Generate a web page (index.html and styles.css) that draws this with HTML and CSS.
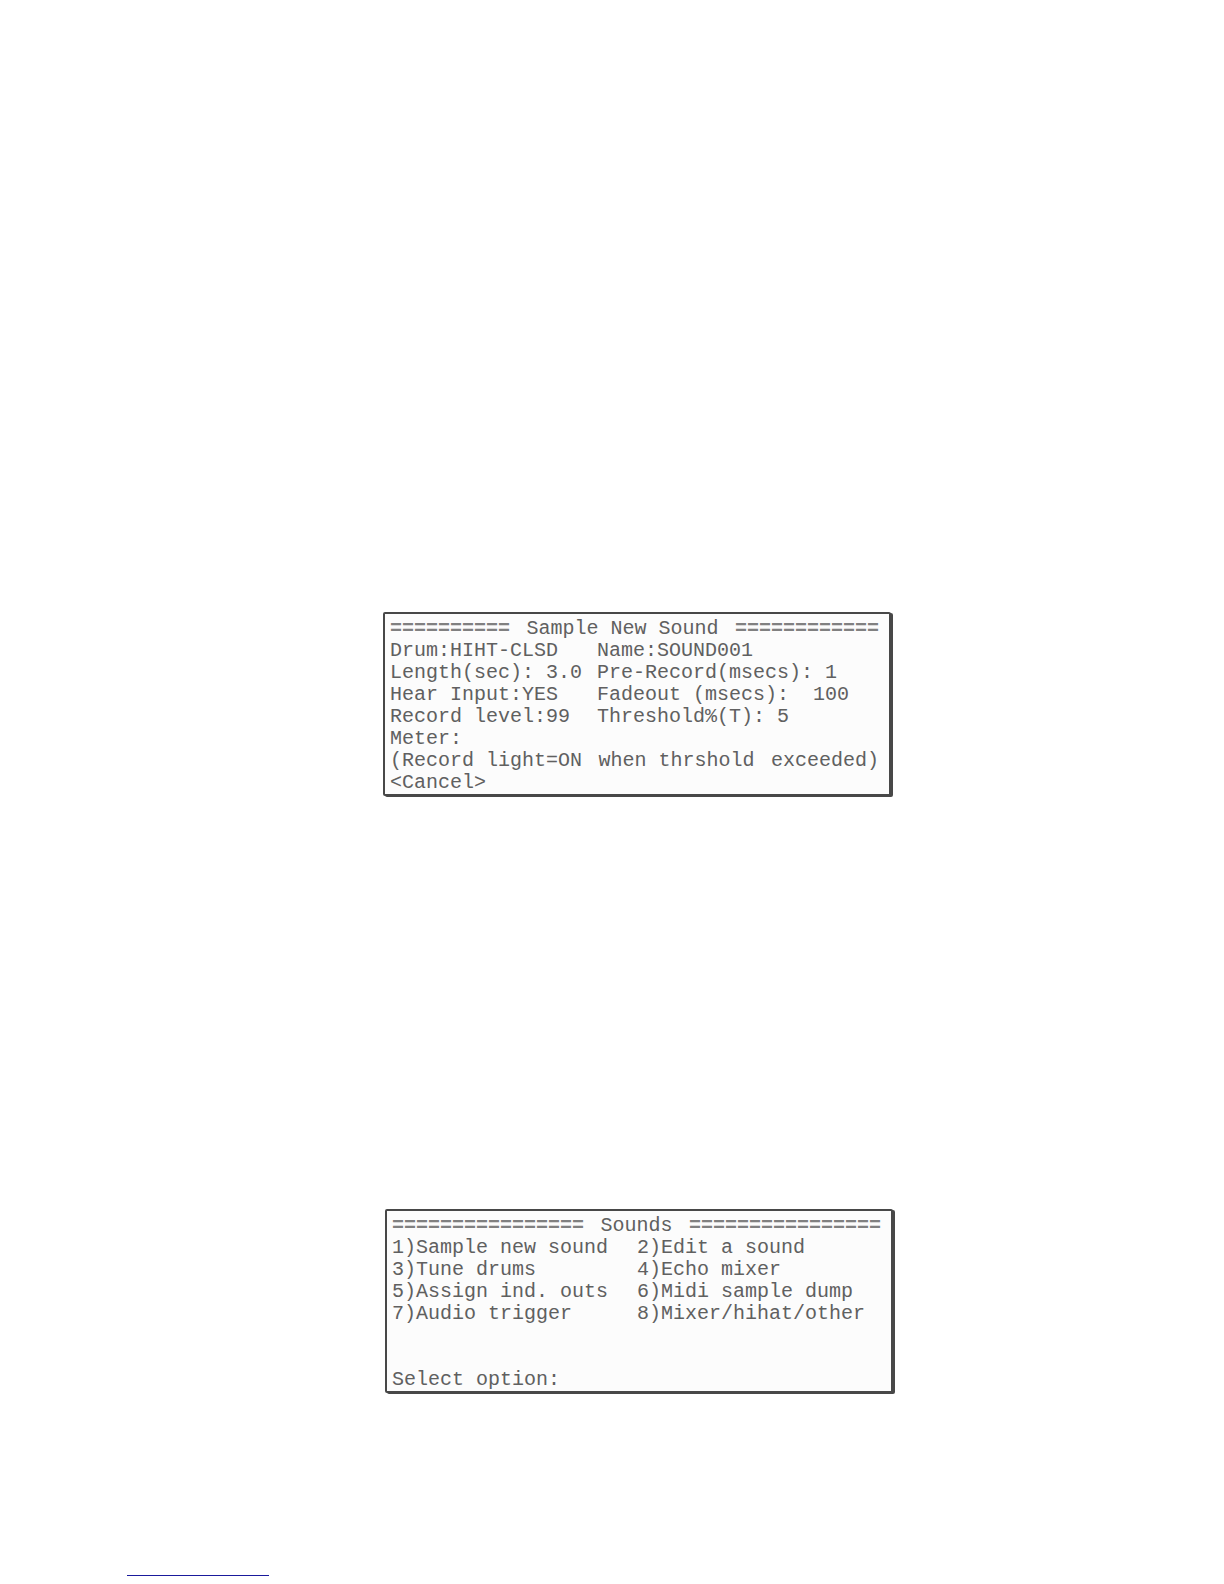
FILE: index.html
```
<!DOCTYPE html>
<html lang="en">
<head>
  <meta charset="utf-8">
  <title>Sample New Sound</title>
  <link rel="stylesheet" href="styles.css">
</head>
<body>
  <main class="page">
    <form class="panel panel-sample">
      <h2 class="title">
        <span class="rule">==========</span>
        <span>Sample New Sound</span>
        <span class="rule">============</span>
      </h2>
      <div class="fields">
        <div class="field"><label for="drum">Drum:</label><input id="drum" value="HIHT-CLSD"></div>
        <div class="field"><label for="name">Name:</label><input id="name" value="SOUND001"></div>
        <div class="field"><label for="length">Length(sec):</label><input id="length" class="w4" value="3.0"></div>
        <div class="field"><label for="prerecord">Pre-Record(msecs):</label><input id="prerecord" class="w2" value="1"></div>
        <div class="field"><label for="hear">Hear Input:</label><input id="hear" value="YES"></div>
        <div class="field"><label for="fadeout">Fadeout (msecs):</label><input id="fadeout" class="w5" value="100"></div>
        <div class="field"><label for="level">Record level:</label><input id="level" class="w2" value="99"></div>
        <div class="field"><label for="threshold">Threshold%(T):</label><input id="threshold" class="w2" value="5"></div>
      </div>
      <div>Meter:</div>
      <div class="note"><span>(Record light=ON</span> <span>when thrshold</span> <span>exceeded)</span></div>
      <button type="button">&lt;Cancel&gt;</button>
    </form>

    <form class="panel panel-sounds">
      <h2 class="title">
        <span class="rule">================</span>
        <span>Sounds</span>
        <span class="rule">================</span>
      </h2>
      <div class="options">
        <button type="button">1)Sample new sound</button>
        <button type="button">2)Edit a sound</button>
        <button type="button">3)Tune drums</button>
        <button type="button">4)Echo mixer</button>
        <button type="button">5)Assign ind. outs</button>
        <button type="button">6)Midi sample dump</button>
        <button type="button">7)Audio trigger</button>
        <button type="button">8)Mixer/hihat/other</button>
      </div>
      <div class="field prompt"><label for="option">Select option:</label><input id="option"></div>
    </form>

    <a class="footer-link" href="#" aria-label="Contents"></a>
  </main>
</body>
</html>
```
FILE: styles.css
```
*, *:before, *:after { box-sizing: border-box; }
body {
  margin: 0;
  background-color: #fff;
  color: #606060;
  font-family: "Liberation Mono", "Courier New", monospace;
  font-size: 20px;
  line-height: 22px;
}
.page {
  display: flex;
  flex-direction: column;
  align-items: center;
  min-height: 100vh;
  padding: 612px 0 8px;
}

/* panels */
.panel {
  display: flex;
  flex-direction: column;
  width: 508px;
  max-width: 100%;
  padding: 4px 10px 0 5px;
  border: 2px solid #484848;
  border-radius: 2px;
  box-shadow: 2px 1px 0 #484848;
  background-color: #fcfcfc;
}
.panel-sample { margin-left: 50px; }
.panel-sounds {
  margin-top: 413px;
  margin-left: 54px;
}
.title {
  display: flex;
  justify-content: space-between;
  margin: 0;
  font-size: 20px;
  font-weight: normal;
}
.rule { font-weight: bold; color: #808080; }
.fields {
  display: grid;
  grid-template-columns: 207px 1fr;
}
.field { display: flex; }
.note {
  display: flex;
  justify-content: space-between;
}
.options {
  display: grid;
  grid-template-columns: 245px 1fr;
}
.prompt { margin-top: 44px; }

/* controls */
input, button {
  height: 22px;
  margin: 0;
  padding: 0;
  border: 0;
  background: transparent;
  color: inherit;
  font: inherit;
  text-align: left;
}
button {
  align-self: flex-start;
  white-space: nowrap;
}
input {
  flex: 1;
  min-width: 0;
}
.w2, .w4, .w5 {
  flex: none;
  text-align: right;
}
.w2 { width: 2ch; }
.w4 { width: 4ch; }
.w5 { width: 5ch; }

.footer-link {
  align-self: flex-start;
  width: 142px;
  margin-top: auto;
  margin-left: 127px;
  border-bottom: 1px solid #1a1a9c;
}
```
